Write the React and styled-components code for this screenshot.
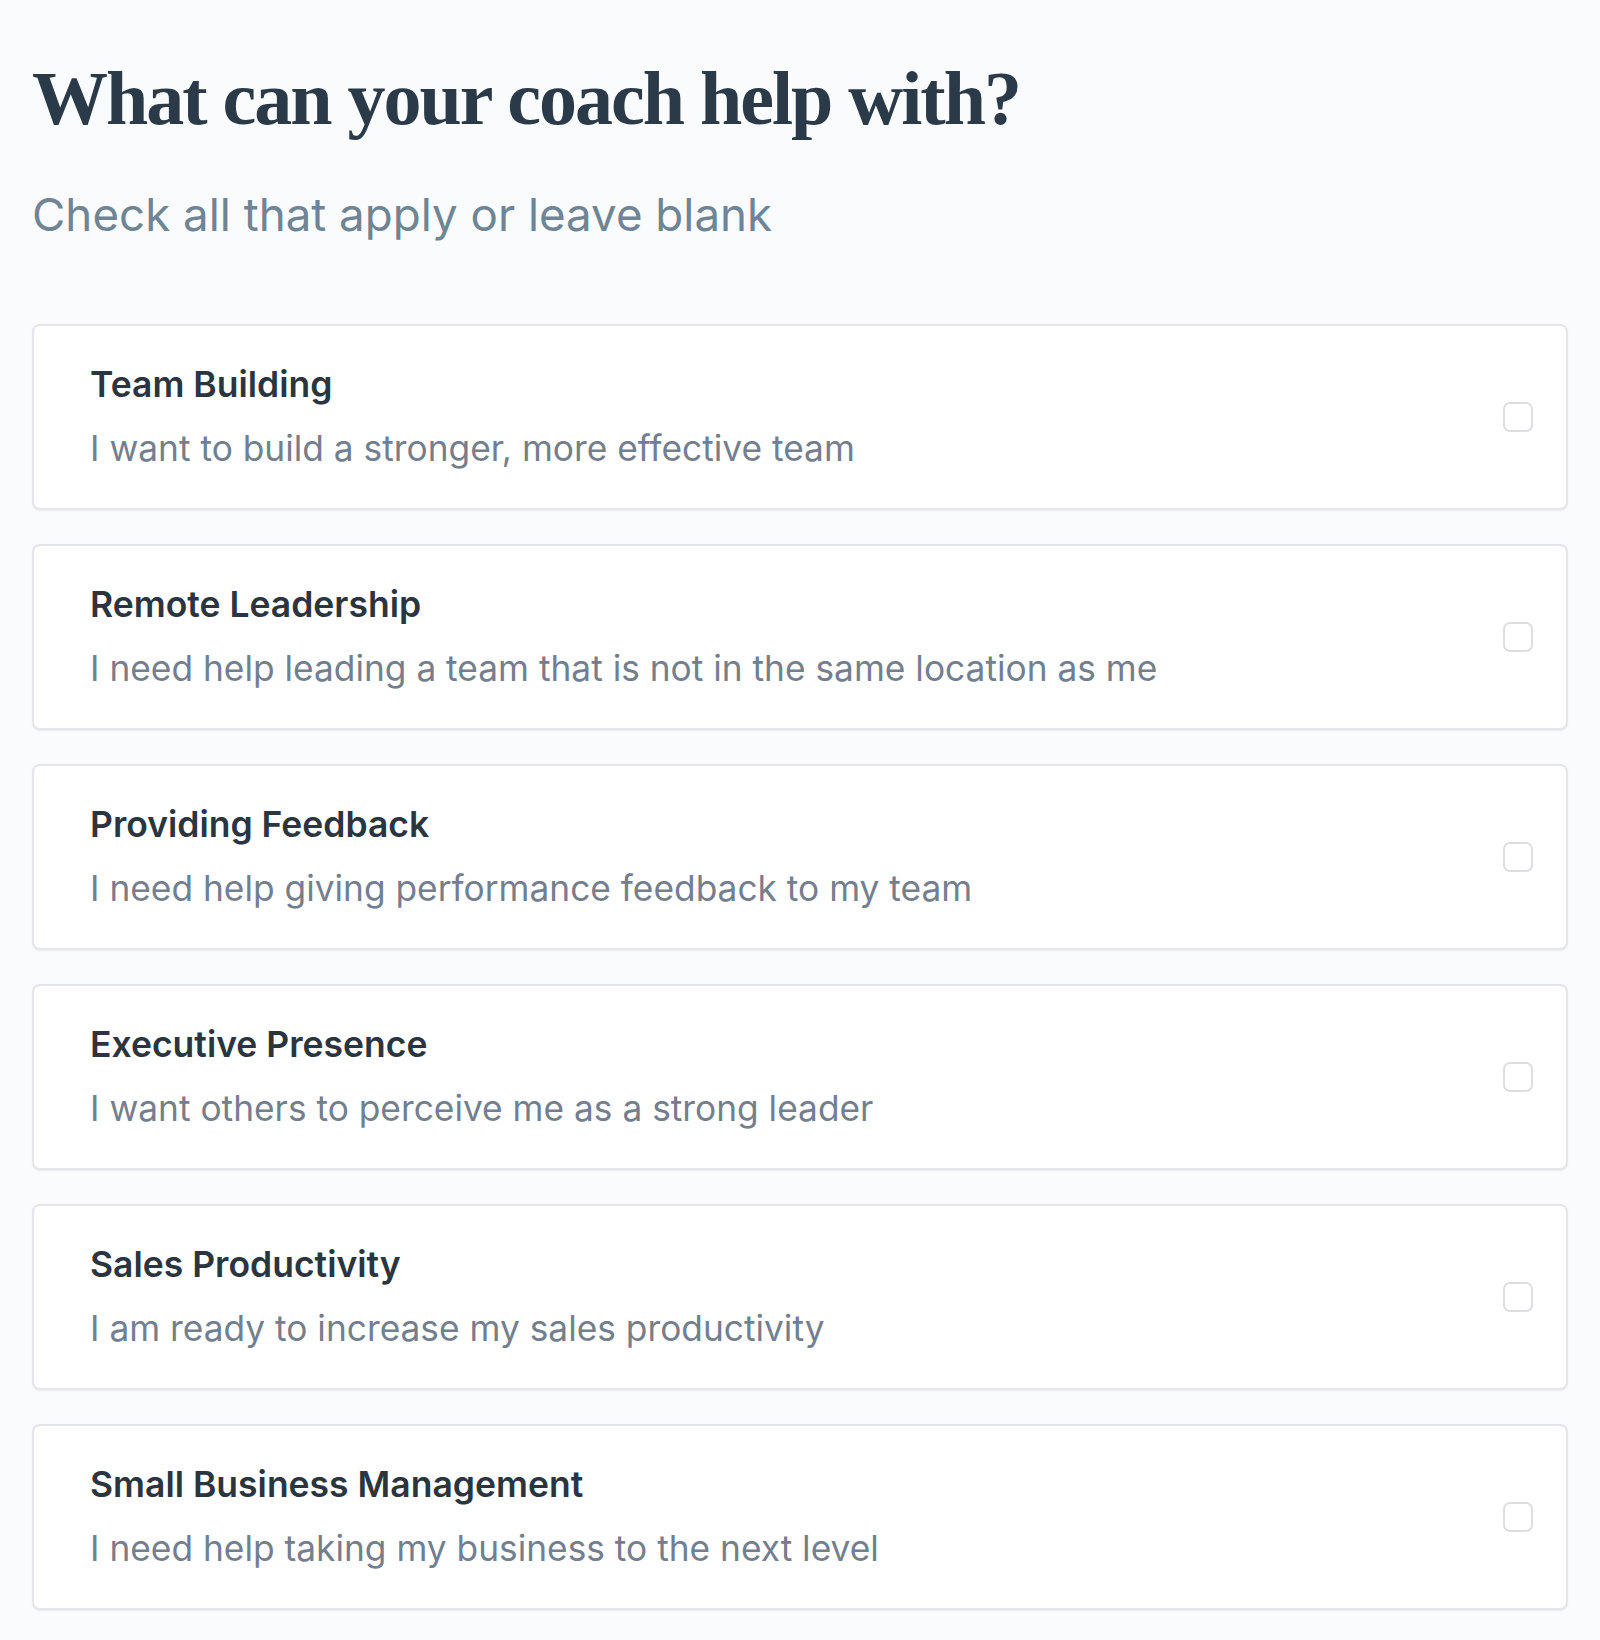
import React, { useState } from 'react';
import styled, { createGlobalStyle } from 'styled-components';

const GlobalStyle = createGlobalStyle`
  html, body {
    margin: 0;
    padding: 0;
    background-color: #f9fbfd;
  }
  * {
    box-sizing: border-box;
  }
`;

const Page = styled.div`
  padding: 50px 32px 40px;
  font-family: 'Inter', 'Noto Sans', sans-serif;
  min-height: 1640px;
`;

const Heading = styled.h1`
  margin: 0;
  font-family: 'Liberation Serif', 'Times New Roman', serif;
  font-weight: 700;
  font-size: 76px;
  line-height: 96px;
  letter-spacing: -2px;
  color: #2b3a48;
`;

const Subtitle = styled.p`
  margin: 37px 0 0;
  font-size: 45.7px;
  line-height: 64px;
  font-weight: 400;
  color: #6f8494;
`;

const List = styled.div`
  display: flex;
  flex-direction: column;
  gap: 34px;
  margin-top: 77px;
`;

const Card = styled.label`
  display: flex;
  align-items: center;
  justify-content: space-between;
  background-color: #ffffff;
  border: 2px solid #e4e6e9;
  border-radius: 8px;
  padding: 32px 33px 32px 56px;
  box-shadow: 0 1px 2px rgba(0, 0, 0, 0.07);
  cursor: pointer;
`;

const Text = styled.div`
  display: flex;
  flex-direction: column;
  gap: 10px;
`;

const Title = styled.div`
  font-size: 35.5px;
  line-height: 54px;
  font-weight: 600;
  color: #2a3540;
`;

const Description = styled.div`
  font-size: 35.3px;
  line-height: 54px;
  font-weight: 400;
  color: #737f8f;
`;

const Box = styled.span`
  flex-shrink: 0;
  width: 30px;
  height: 30px;
  border: 2px solid ${(p) => (p.checked ? '#2b3a48' : '#dcdee1')};
  background-color: ${(p) => (p.checked ? '#2b3a48' : '#ffffff')};
  border-radius: 7px;
`;

const items = [
  ['Team Building', 'I want to build a stronger, more effective team'],
  ['Remote Leadership', 'I need help leading a team that is not in the same location as me'],
  ['Providing Feedback', 'I need help giving performance feedback to my team'],
  ['Executive Presence', 'I want others to perceive me as a strong leader'],
  ['Sales Productivity', 'I am ready to increase my sales productivity'],
  ['Small Business Management', 'I need help taking my business to the next level'],
];

export default function App() {
  const [checked, setChecked] = useState({});

  return (
    <Page>
      <GlobalStyle />
      <Heading>What can your coach help with?</Heading>
      <Subtitle>Check all that apply or leave blank</Subtitle>
      <List>
        {items.map(([title, desc]) => (
          <Card
            key={title}
            onClick={() => setChecked((c) => ({ ...c, [title]: !c[title] }))}
          >
            <Text>
              <Title>{title}</Title>
              <Description>{desc}</Description>
            </Text>
            <Box checked={!!checked[title]} />
          </Card>
        ))}
      </List>
    </Page>
  );
}
